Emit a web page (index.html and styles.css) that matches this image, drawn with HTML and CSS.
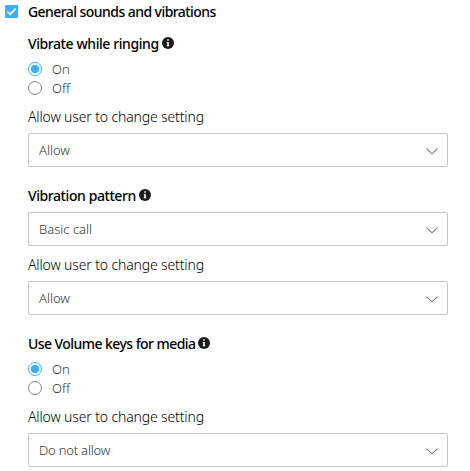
FILE: index.html
```
<!DOCTYPE html>
<html lang="en">
<head>
<meta charset="utf-8">
<title>General sounds and vibrations</title>
<link rel="stylesheet" href="styles.css">
</head>
<body>
<svg class="defs" aria-hidden="true">
  <symbol id="info" viewBox="0 0 12 12"><circle cx="6" cy="6" r="6" fill="#1c1a1d"/><path d="M5.200 2.300h1.600v1.500H5.200zM4.600 5h2.200v3.500h.6v.8H4.600v-.8h.6V5.800h-.6z" fill="#fff"/></symbol>
  <symbol id="chevron" viewBox="0 0 12 7"><path d="M.5.6 6 5.800 11.500.6" fill="none" stroke="#777" stroke-width="1.100"/></symbol>
</svg>
<main class="policy">
  <header class="policy-head">
    <span class="checkbox"><svg viewBox="0 0 13 13"><path d="M2.400 6.700 5.200 9.300 10.700 3.500" fill="none" stroke="#fff" stroke-width="1.800"/></svg></span>
    <h1 class="title tight">General sounds and vibrations</h1>
  </header>
  <section class="setting">
    <h2 class="heading"><span>Vibrate while ringing</span><svg class="info"><use href="#info"/></svg></h2>
    <div class="radios">
      <div class="option"><span class="radio checked"></span><span>On</span></div>
      <div class="option"><span class="radio"></span><span>Off</span></div>
    </div>
    <div class="label">Allow user to change setting</div>
    <div class="select"><span>Allow</span><svg class="chevron"><use href="#chevron"/></svg></div>
  </section>
  <section class="setting">
    <h2 class="heading"><span>Vibration pattern</span><svg class="info"><use href="#info"/></svg></h2>
    <div class="select"><span>Basic call</span><svg class="chevron"><use href="#chevron"/></svg></div>
    <div class="label">Allow user to change setting</div>
    <div class="select"><span>Allow</span><svg class="chevron"><use href="#chevron"/></svg></div>
  </section>
  <section class="setting">
    <h2 class="heading tight"><span>Use Volume keys for media</span><svg class="info"><use href="#info"/></svg></h2>
    <div class="radios">
      <div class="option"><span class="radio checked"></span><span>On</span></div>
      <div class="option"><span class="radio"></span><span>Off</span></div>
    </div>
    <div class="label">Allow user to change setting</div>
    <div class="select"><span class="wide">Do not allow</span><svg class="chevron"><use href="#chevron"/></svg></div>
  </section>
</main>
</body>
</html>
```
FILE: styles.css
```
* { box-sizing: border-box; }
body { margin: 0; background: #fff; color: #000; font-family: "Noto Sans", "Open Sans", sans-serif; font-size: 14px; overflow: hidden; }
.defs { display: none; }
.policy { width: 448px; white-space: nowrap; }
.policy-head { display: flex; align-items: center; height: 24px; padding-left: 5px; gap: 10px; }
.checkbox { width: 13px; height: 13px; margin-top: -1px; border-radius: 1px; background: #38b0ff; }
.checkbox svg { display: block; width: 13px; height: 13px; }
.title, .heading { margin: 0; font-size: 14px; font-weight: 500; line-height: 22px; letter-spacing: -0.42px; }
.tight { letter-spacing: -0.56px; }
.setting { margin: 9px 0 0 28px; }
.setting + .setting { margin-top: 18px; }
.heading { display: flex; height: 22px; margin-bottom: 5px; }
.info { width: 12px; height: 12px; margin: 4px 0 0 3px; }
.radios { margin-top: -1px; margin-bottom: 9px; }
.option { display: flex; align-items: center; gap: 10px; height: 19px; font-size: 13px; font-weight: 300; color: #333; }
.radio { width: 14px; height: 14px; border: 1px solid #858585; border-radius: 50%; }
.radio.checked { border-color: #38b0ff; background: radial-gradient(circle, #38b0ff 3.800px, #fff 4.500px); }
.label { height: 22px; margin-bottom: 5px; line-height: 22px; font-size: 14px; font-weight: 300; letter-spacing: -0.14px; }
.select { display: flex; align-items: center; justify-content: space-between; height: 34px; padding: 0 9px 0 10px; border: 1px solid #c5c5c5; border-radius: 2px; font-size: 13px; font-weight: 300; color: #333; }
.select .wide { letter-spacing: -0.2px; }
.select + .label { margin-top: 8px; }
.chevron { width: 12px; height: 7px; margin-top: 3px; }
```
